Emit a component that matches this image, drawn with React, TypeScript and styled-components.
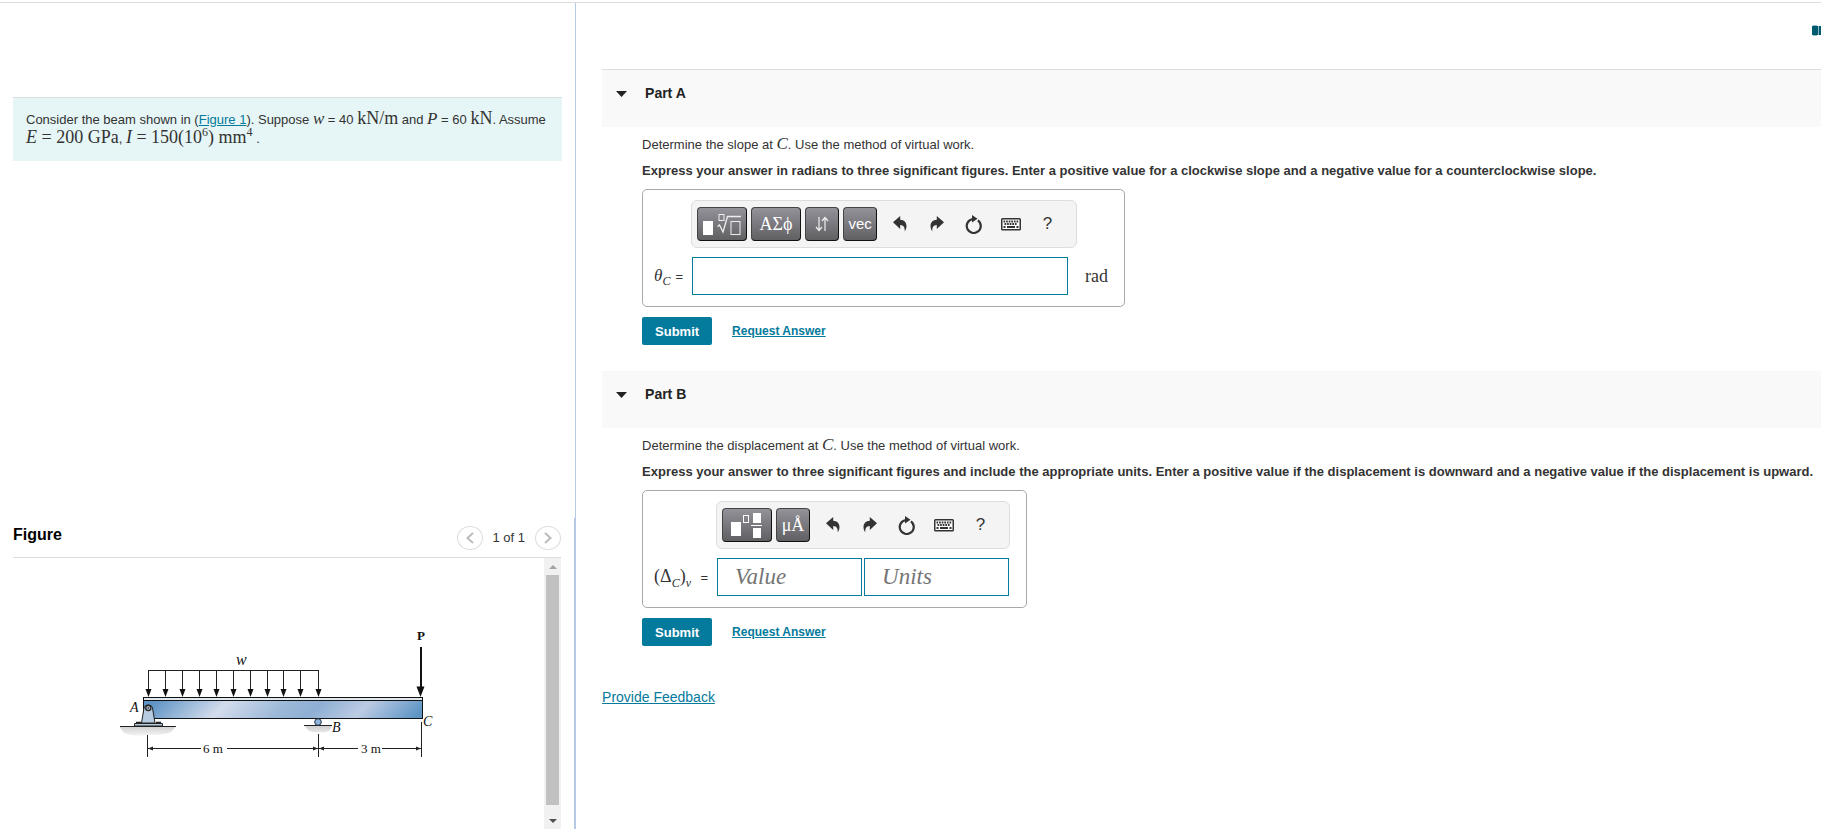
import React from "react";
import styled, { createGlobalStyle } from "styled-components";

const teal = "#047a9c";
const serif = `"Liberation Serif", "Times New Roman", serif`;

const GlobalStyle = createGlobalStyle`
  *, *::before, *::after { box-sizing: border-box; }
  body {
    margin: 0;
    background: #fff;
    color: #333;
    font: 13px/19px "Liberation Sans", Arial, sans-serif;
  }
  h2, p { margin: 0; }
  a { color: ${teal}; }
  button, input { font-family: inherit; margin: 0; }
`;

const Page = styled.div`
  display: grid;
  grid-template-columns: 6fr 13fr;
  height: 100vh;
  padding-top: 2px;
  overflow: hidden;
`;

const TopLine = styled.div`
  grid-column: 1 / -1;
  height: 1px;
  background: #ddd;
`;

const ProblemColumn = styled.aside`
  display: flex;
  flex-direction: column;
  justify-content: space-between;
  min-width: 0;
  height: calc(100vh - 3px);
`;

const WorkColumn = styled.main`
  min-width: 0;
  height: calc(100vh - 3px);
  border-left: 1px solid #b6cbe3;
  padding-left: 26px;
  overflow: hidden;
`;

const Statement = styled.section`
  margin: 94px 13px 0;
  padding: 12px 10px 12px 13px;
  min-height: 64px;
  border-top: 1px solid #d5dedd;
  background: #e6f6f6;
`;

const Math = styled.span<{ $italic?: boolean }>`
  font-family: ${serif};
  font-size: ${(p) => (p.$italic ? 17 : 18)}px;
  line-height: 0;
  font-style: ${(p) => (p.$italic ? "italic" : "normal")};

  sup, sub {
    font-size: 12px;
    line-height: 0;
  }
`;

const FigurePanel = styled.section`
  border-right: 1px solid #b6cbe3;
  padding: 0 13px;
`;

const FigureHeader = styled.header`
  display: flex;
  align-items: center;
  justify-content: space-between;
  height: 40px;
  border-bottom: 1px solid #ddd;
`;

const FigureTitle = styled.h2`
  color: #000;
  font-size: 16px;
  line-height: 20px;
  padding-bottom: 6px;
`;

const Pager = styled.nav`
  display: flex;
  align-items: center;
  gap: 10px;
`;

const PagerButton = styled.button`
  display: grid;
  place-items: center;
  width: 26px;
  height: 24px;
  padding: 0;
  border: 1px solid #ddd;
  border-radius: 50%;
  background: #fff;
`;

const FigureScroller = styled.div`
  display: flex;
  justify-content: space-between;
  height: 271px;
`;

const BeamDrawing = styled.svg`
  flex: none;
  width: 350px;
  height: 160px;
  margin: 52px 0 0 87px;
`;

const ScrollTrack = styled.div`
  display: flex;
  flex-direction: column;
  align-items: center;
  width: 17px;
  background: #f1f1f1;
`;

const ScrollArrow = styled.div<{ $down?: boolean }>`
  display: grid;
  place-items: center;
  height: 17px;

  &::before {
    content: "";
    border: 4px solid transparent;
    border-top: ${(p) => (p.$down ? "4px solid #505050" : "0")};
    border-bottom: ${(p) => (p.$down ? "0" : "4px solid #a3a3a3")};
  }
`;

const ScrollThumb = styled.div`
  width: 13px;
  height: 230px;
  margin-bottom: auto;
  background: #c1c1c1;
`;

const BookBar = styled.div`
  display: flex;
  justify-content: flex-end;
  height: 66px;
  padding-top: 22px;
`;

const PartHeader = styled.header<{ $ruled?: boolean }>`
  display: flex;
  align-items: flex-start;
  gap: 18px;
  height: ${(p) => (p.$ruled ? 58 : 57)}px;
  padding: 14px 14px 0;
  border-top: ${(p) => (p.$ruled ? "1px solid #ddd" : "0")};
  background: #f9f9f9;
`;

const Disclosure = styled.button`
  display: grid;
  place-items: center;
  width: 11px;
  height: 19px;
  padding: 0;
  border: 0;
  background: none;
`;

const PartTitle = styled.h2`
  color: #222;
  font-size: 14px;
  line-height: 19px;
`;

const PartBody = styled.div`
  padding: 8px 0 26px 40px;
`;

const Prompt = styled.p`
  line-height: 20px;
`;

const Directions = styled.p`
  margin-top: 6px;
  font-weight: bold;
  line-height: 20px;
  white-space: nowrap;
`;

const AnswerBox = styled.div`
  display: grid;
  grid-template-columns: auto auto auto;
  row-gap: 9px;
  align-items: center;
  width: max-content;
  height: 118px;
  margin-top: 8px;
  padding: 10px 16px 11px 11px;
  border: 1px solid #a9a9a9;
  border-radius: 5px;
`;

const Toolbar = styled.div<{ $wide?: boolean }>`
  grid-column: 2;
  display: flex;
  align-items: center;
  gap: 4px;
  width: ${(p) => (p.$wide ? 386 : 294)}px;
  height: 48px;
  padding: 0 5px;
  border: 1px solid #ddd;
  border-radius: 6px;
  background: #f4f4f4;
`;

const PaletteButton = styled.button<{ $wide?: boolean; $sans?: boolean }>`
  display: grid;
  place-items: center;
  width: ${(p) => (p.$wide ? 50 : 34)}px;
  height: 34px;
  padding: 0;
  border: 1px solid #222;
  border-color: #444 #111 #111 #444;
  border-radius: 4px;
  background: linear-gradient(#94929a, #605f62);
  color: #fff;
  font-family: ${(p) => (p.$sans ? "inherit" : serif)};
  font-size: ${(p) => (p.$sans ? 15 : 18)}px;
  line-height: 20px;
`;

const ToolGroup = styled.div`
  display: flex;
`;

const ToolButton = styled.button`
  display: grid;
  place-items: center;
  width: 37px;
  height: 34px;
  padding: 0;
  border: 0;
  background: none;
  color: #333;
  font-size: 17px;
`;

const AnswerLabel = styled.label<{ $wide?: boolean }>`
  grid-column: 1;
  display: flex;
  align-items: baseline;
  justify-content: space-between;
  width: ${(p) => (p.$wide ? 62 : 37)}px;
  padding-right: 8px;
`;

const Fields = styled.div`
  display: flex;
  gap: 2px;
  padding: 0 1px;
`;

const Field = styled.input<{ $wide?: boolean }>`
  width: ${(p) => (p.$wide ? 376 : 145)}px;
  height: 38px;
  padding: 0 17px;
  border: 1px solid ${teal};
  background: #fff;
  font: italic 23px ${serif};

  &::placeholder { color: #757575; opacity: 1; }
`;

const WideFields = styled(Fields)`
  width: 377px;
  padding-right: 0;
`;

const Unit = styled(Math)`
  padding-left: 8px;
`;

const Actions = styled.div`
  display: flex;
  align-items: center;
  gap: 20px;
  margin-top: 10px;
`;

const SubmitButton = styled.button`
  width: 70px;
  height: 28px;
  padding: 0;
  border: 0;
  border-radius: 2px;
  background: ${teal};
  color: #fff;
  font-size: 13px;
  font-weight: bold;
`;

const RequestLink = styled.a`
  font-size: 12px;
  font-weight: bold;
`;

const FeedbackLink = styled.a`
  display: inline-block;
  margin-top: 15px;
  font-size: 14px;
  line-height: 20px;
`;

const Chevron = ({ right }: { right?: boolean }) => (
  <svg width="8" height="12" viewBox="0 0 8 12" fill="none" stroke="#bbb" strokeWidth="2">
    <path d={right ? "M1 1l5.500 5L1 11" : "M7 1L1.500 6 7 11"} />
  </svg>
);

const Undo = () => (
  <svg width="14" height="16" viewBox="0 0 14 16" fill="currentColor">
    <path d="M0 6.200L7.200 0v3.700c3.800.1 6.300 2.500 6.300 6.300 0 2.200-.8 4-1.800 5.200.3-3.600-1.100-6-4.500-6.100v4z" />
  </svg>
);

const Redo = () => (
  <svg width="14" height="16" viewBox="0 0 14 16" fill="currentColor">
    <path d="M14 6.200L6.800 0v3.700C3 3.800.5 6.200.5 10c0 2.200.8 4 1.800 5.200C2 11.600 3.400 9.200 6.800 9.100v4z" />
  </svg>
);

const Reset = () => (
  <svg width="17" height="19" viewBox="0 0 17 19">
    <path d="M12.900 5.300A7 7 0 1 1 8 4" fill="none" stroke="currentColor" strokeWidth="2.200" />
    <path d="M7 0l5.500 3.700L7 7.500z" fill="currentColor" />
  </svg>
);

const Keyboard = () => (
  <svg width="20" height="13" viewBox="0 0 20 13">
    <rect x="0.750" y="0.750" width="18.500" height="11" rx="0.800" fill="#fff" stroke="currentColor" strokeWidth="1.500" />
    <path d="M2.500 3.500h15M3.500 6h13" stroke="currentColor" strokeWidth="1.800" strokeDasharray="1.700 0.900" />
    <path d="M2.500 9h2M6 9h8M15.500 9h2" stroke="currentColor" strokeWidth="1.800" />
  </svg>
);

const RootTemplate = () => (
  <svg width="38" height="24" viewBox="0 0 38 24">
    <path d="M0 9h10v14H0z" fill="#fff" />
    <g fill="none" stroke="#eee">
      <rect x="16" y="2.500" width="5" height="6" />
      <path d="M14.500 14.500l2-1.500 3.500 7L24.500 4.500H38" strokeWidth="1.300" />
      <rect x="28" y="9.500" width="9" height="13" />
    </g>
  </svg>
);

const FractionTemplate = () => (
  <svg width="32" height="26" viewBox="0 0 32 26">
    <path d="M0 10h10v14H0zM22 1h8v10h-8zM22 16h8v10h-8zM20 13h11v1H20z" fill="#fff" />
    <rect x="12.500" y="3.500" width="5" height="7" fill="none" stroke="#fff" />
  </svg>
);

const Arrows = () => (
  <svg width="14" height="16" viewBox="0 0 14 16" fill="none" stroke="#eee" strokeWidth="1.200">
    <path d="M4 1v13M1 11l3 3.500L7 11M10 15V2M7 5l3-3.500L13 5" />
  </svg>
);

const Book = () => (
  <svg width="9" height="11" viewBox="0 0 9 11">
    <path d="M0 1h9v9H0z" fill="#005a70" />
    <path d="M6.500 1v9M1 .5h4M1 10.500h4" stroke="#8fb8c3" />
  </svg>
);

const CommonTools = () => (
  <ToolGroup>
    <ToolButton aria-label="Undo"><Undo /></ToolButton>
    <ToolButton aria-label="Redo"><Redo /></ToolButton>
    <ToolButton aria-label="Reset"><Reset /></ToolButton>
    <ToolButton aria-label="Keyboard shortcuts"><Keyboard /></ToolButton>
    <ToolButton aria-label="Help">?</ToolButton>
  </ToolGroup>
);

const loadArrows = [48.5, 65.5, 82.5, 99.5, 116.5, 133.5, 150.5, 167.5, 183.5, 200.5, 218.5];

const Beam = () => (
  <BeamDrawing viewBox="0 0 350 160" role="img" aria-label="Beam with distributed and point loads">
    <defs>
      <linearGradient id="steel" gradientUnits="userSpaceOnUse" x1="43" y1="98" x2="183" y2="238">
        <stop offset="0.020" stopColor="#5f94c4" />
        <stop offset="0.280" stopColor="#d3dcec" />
        <stop offset="0.500" stopColor="#9bb8d8" />
        <stop offset="0.620" stopColor="#8eafd3" />
        <stop offset="0.790" stopColor="#bccbe4" />
        <stop offset="1" stopColor="#6096c5" />
      </linearGradient>
      <linearGradient id="ground" x1="0" y1="0" x2="0" y2="1">
        <stop offset="0" stopColor="#cfcfcf" />
        <stop offset="1" stopColor="#f4f4f4" />
      </linearGradient>
    </defs>
    <path d="M20 117h55c-3 7-8 6-16 8-12-1-18 2-28 0-5 0-9-3-11-8zM205 116h27c-2 5-4 7-12 6-7 1-12 0-15-6z" fill="url(#ground)" />
    <path d="M20 116.500h56M204 115.500h28" stroke="#222" />
    <rect x="43.500" y="87.500" width="279" height="21" fill="url(#steel)" stroke="#111" />
    <rect x="43.500" y="87.500" width="279" height="3" fill="#e0e9f0" stroke="#111" />
    <path d="M34.500 113.500h28v2.500h-28z" fill="#b3cbdc" stroke="#222" />
    <path d="M36 112.500h5M56 112.500h5" stroke="#222" strokeWidth="1.500" />
    <path d="M41.500 113l2.500-15c.5-4 8-4 8.500 0l2.500 15z" fill="#b7cce0" stroke="#222" />
    <circle cx="48.300" cy="98" r="2.600" fill="#aebdc9" stroke="#222" strokeWidth="1.300" />
    <circle cx="48.300" cy="98" r="0.800" fill="#222" />
    <circle cx="218" cy="112" r="3.300" fill="#8fb5dc" stroke="#234" />
    <path d="M48.500 60.500h170" stroke="#222" />
    {loadArrows.map((x) => (
      <g key={x}>
        <path d={`M${x} 60v22`} stroke="#222" />
        <path d={`M${x - 3} 79h6l-3 8z`} fill="#111" />
      </g>
    ))}
    <path d="M321 37v42" stroke="#111" strokeWidth="2" />
    <path d="M316.500 76.500h8L320.500 87z" fill="#111" />
    <path d="M47.500 125v22M218.500 124v23M321.500 112v35M48 138.500h53M127 138.500h131M282 138.500h39" stroke="#222" />
    <path d="M48 138.500l5-2v4zM218 138.500l-5-2v4zM219 138.500l5-2v4zM321 138.500l-5-2v4z" fill="#222" />
    <g fontFamily="Liberation Serif, serif" fontSize="13" fill="#111">
      <text x="317" y="30" fontWeight="bold">P</text>
      <text x="136" y="55" fontStyle="italic" fontSize="16">w</text>
      <text x="30" y="102" fontStyle="italic" fontSize="14">A</text>
      <text x="232" y="122" fontStyle="italic" fontSize="14">B</text>
      <text x="323" y="116" fontStyle="italic" fontSize="14">C</text>
      <text x="103" y="143">6 m</text>
      <text x="261" y="143">3 m</text>
    </g>
  </BeamDrawing>
);

const PartHeading = ({ name, ruled }: { name: string; ruled?: boolean }) => (
  <PartHeader $ruled={ruled}>
    <Disclosure aria-label={`Collapse ${name}`}>
      <svg width="11" height="6" viewBox="0 0 11 6"><path d="M0 0h11L5.500 6z" fill="#222" /></svg>
    </Disclosure>
    <PartTitle>{name}</PartTitle>
  </PartHeader>
);

const AnswerActions = () => (
  <Actions>
    <SubmitButton>Submit</SubmitButton>
    <RequestLink href="#request">Request Answer</RequestLink>
  </Actions>
);

export default function App() {
  return (
    <>
      <GlobalStyle />
      <Page>
        <TopLine />
        <ProblemColumn>
          <Statement>
            Consider the beam shown in (<a href="#figure">Figure 1</a>). Suppose <Math $italic>w</Math> = 40{" "}
            <Math>kN/m</Math> and <Math $italic>P</Math> = 60 <Math>kN</Math>. Assume{" "}
            <Math><i>E</i> = 200 GPa</Math>, <Math><i>I</i> = 150(10<sup>6</sup>) mm<sup>4</sup></Math> .
          </Statement>
          <FigurePanel id="figure">
            <FigureHeader>
              <FigureTitle>Figure</FigureTitle>
              <Pager aria-label="Figures">
                <PagerButton aria-label="Previous figure"><Chevron /></PagerButton>
                <span>1 of 1</span>
                <PagerButton aria-label="Next figure"><Chevron right /></PagerButton>
              </Pager>
            </FigureHeader>
            <FigureScroller>
              <Beam />
              <ScrollTrack>
                <ScrollArrow />
                <ScrollThumb />
                <ScrollArrow $down />
              </ScrollTrack>
            </FigureScroller>
          </FigurePanel>
        </ProblemColumn>
        <WorkColumn>
          <BookBar><Book /></BookBar>
          <PartHeading name="Part A" ruled />
          <PartBody>
            <Prompt>Determine the slope at <Math $italic>C</Math>. Use the method of virtual work.</Prompt>
            <Directions>
              Express your answer in radians to three significant figures. Enter a positive value for a clockwise slope
              and a negative value for a counterclockwise slope.
            </Directions>
            <AnswerBox>
              <Toolbar $wide>
                <PaletteButton $wide aria-label="Templates"><RootTemplate /></PaletteButton>
                <PaletteButton $wide>ΑΣϕ</PaletteButton>
                <PaletteButton aria-label="Arrows"><Arrows /></PaletteButton>
                <PaletteButton $sans>vec</PaletteButton>
                <CommonTools />
              </Toolbar>
              <AnswerLabel htmlFor="slope"><Math $italic>θ<sub>C</sub></Math> <span>=</span></AnswerLabel>
              <WideFields><Field id="slope" $wide /></WideFields>
              <Unit>rad</Unit>
            </AnswerBox>
            <AnswerActions />
          </PartBody>
          <PartHeading name="Part B" />
          <PartBody>
            <Prompt>Determine the displacement at <Math $italic>C</Math>. Use the method of virtual work.</Prompt>
            <Directions>
              Express your answer to three significant figures and include the appropriate units. Enter a positive value
              if the displacement is downward and a negative value if the displacement is upward.
            </Directions>
            <AnswerBox>
              <Toolbar>
                <PaletteButton $wide aria-label="Templates"><FractionTemplate /></PaletteButton>
                <PaletteButton>μÅ</PaletteButton>
                <CommonTools />
              </Toolbar>
              <AnswerLabel $wide htmlFor="value">
                <Math>(Δ<sub><i>C</i></sub>)<sub><i>v</i></sub></Math> <span>=</span>
              </AnswerLabel>
              <Fields>
                <Field id="value" placeholder="Value" />
                <Field aria-label="Units" placeholder="Units" />
              </Fields>
            </AnswerBox>
            <AnswerActions />
          </PartBody>
          <FeedbackLink href="#feedback">Provide Feedback</FeedbackLink>
        </WorkColumn>
      </Page>
    </>
  );
}
